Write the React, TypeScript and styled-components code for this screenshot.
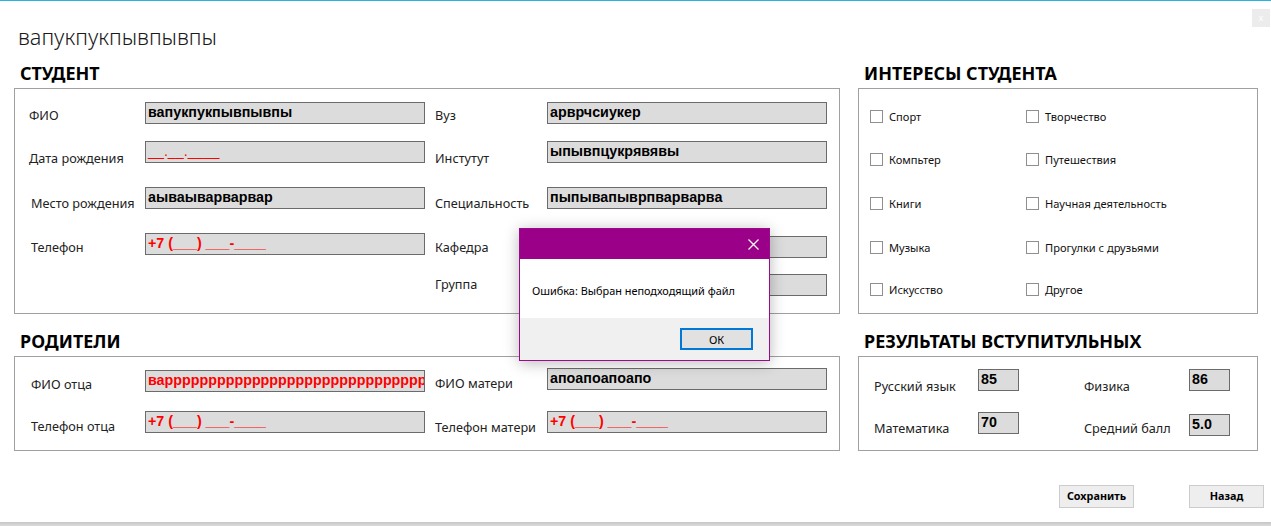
import React from "react";
import styled, { createGlobalStyle } from "styled-components";

const UI = `"Noto Sans", "Open Sans", sans-serif`;
const MS = `"Liberation Sans", Arial, sans-serif`;
const LABEL_SIZE = 12.7;

const Global = createGlobalStyle`
  html, body { margin: 0; padding: 0; background: #fff; }
  body { font-family: ${UI}; }
`;

const Window = styled.div`
  position: relative;
  width: 1271px;
  height: 526px;
  box-sizing: border-box;
  border-top: 1px solid #27b4de;
  background: #fff;
  overflow: hidden;
  display: flex;
  flex-direction: column;
`;

const CloseChrome = styled.div`
  position: absolute;
  left: 1252px;
  top: 8px;
  width: 18px;
  height: 18px;
  background: #ececec;
  color: #fff;
  font: 9px/18px ${MS};
  text-align: center;
`;

const Title = styled.h1`
  margin: 0;
  height: 56px;
  box-sizing: border-box;
  padding: 22px 0 0 18px;
  font: 300 21.7px/28px ${UI};
  color: #1a1a1a;
`;

const Grid = styled.div`
  display: grid;
  grid-template-columns: 826px 400px;
  column-gap: 18px;
  row-gap: 11px;
  padding-left: 14px;
`;

const Section = styled.section`
  display: flex;
  flex-direction: column;
`;

const Header = styled.h2`
  margin: 0;
  height: 31px;
  box-sizing: border-box;
  padding: 6px 0 0 6px;
  font: 700 17.9px/20px ${UI};
  color: #000;
`;

const Frame = styled.div<{ $h: number; $pl: number }>`
  height: ${(p) => p.$h}px;
  box-sizing: border-box;
  border: 1px solid #a0a0a0;
  padding-left: ${(p) => p.$pl}px;
  display: flex;
`;

const FieldColumn = styled.div<{ $gap?: number }>`
  display: flex;
  flex-direction: column;
  margin-left: ${(p) => p.$gap ?? 0}px;
`;

const FieldRow = styled.div<{ $mt: number }>`
  display: flex;
  height: 22px;
  margin-top: ${(p) => p.$mt}px;
`;

const FieldLabel = styled.div<{ $w: number; $dy: number; $dx?: number }>`
  width: ${(p) => p.$w}px;
  box-sizing: border-box;
  padding-top: ${(p) => p.$dy - (8 - 0.326 * LABEL_SIZE)}px;
  padding-left: ${(p) => p.$dx ?? 0}px;
  font: 400 ${LABEL_SIZE}px/16px ${UI};
  color: #222;
  white-space: nowrap;
`;

const InputBox = styled.div<{ $w?: number; $red?: boolean; $thin?: boolean }>`
  width: ${(p) => p.$w ?? 280}px;
  height: 22px;
  box-sizing: border-box;
  border: 1px solid #6b6b6b;
  background: #dcdcdc;
  padding: 1px 2px 0;
  font: ${(p) => (p.$thin ? 400 : 700)} 14.3px/16px ${MS};
  color: ${(p) => (p.$red ? "#ff0000" : "#000")};
  white-space: nowrap;
  overflow: hidden;
  text-overflow: clip;
`;

const CheckGrid = styled.div`
  display: grid;
  grid-auto-flow: column;
  grid-template-columns: 156px auto;
  grid-template-rows: 43px 44px 44px 42px 13px;
  padding-top: 21px;
  padding-left: 11px;
`;

const CheckItem = styled.label`
  display: flex;
  align-items: center;
  gap: 6px;
  height: 13px;
  font: 400 11.1px/13px ${UI};
  color: #111;
  white-space: nowrap;
`;

const CheckBox = styled.span`
  width: 13px;
  height: 13px;
  box-sizing: border-box;
  border: 1px solid #8f8f8f;
  background: #fff;
  flex: none;
`;

const Footer = styled.div`
  display: flex;
  justify-content: flex-end;
  gap: 55px;
  padding-right: 7px;
  margin-top: 34px;
`;

const Button = styled.button`
  width: 75px;
  height: 23px;
  box-sizing: border-box;
  border: 1px solid #cccccc;
  background: #eeeeee;
  font: 700 10.8px/1 ${UI};
  color: #000;
  padding: 0;
`;

const BottomBar = styled.div`
  margin-top: 14px;
  height: 4px;
  background: linear-gradient(#c6c6c6, #dcdcdc);
`;

const Dialog = styled.div`
  position: absolute;
  left: 519px;
  top: 227px;
  width: 251px;
  height: 133px;
  box-sizing: border-box;
  border: 1px solid #9b0a8a;
  box-shadow: 0 2px 14px rgba(0, 0, 0, 0.28);
  display: flex;
  flex-direction: column;
`;

const DialogTitle = styled.div`
  height: 30px;
  background: #9b0088;
  display: flex;
  justify-content: flex-end;
  align-items: center;
  padding-right: 10px;
`;

const DialogBody = styled.div`
  height: 59px;
  background: #fff;
  box-sizing: border-box;
  padding: 4px 0 0 12px;
  display: flex;
  align-items: center;
  font: 400 10.9px/16px ${UI};
  color: #000;
`;

const DialogFooter = styled.div`
  flex: 1;
  background: #f0f0f0;
  display: flex;
  justify-content: flex-end;
  align-items: flex-start;
  padding: 10px 16px 0 0;
`;

const OkButton = styled.button`
  width: 73px;
  height: 22px;
  box-sizing: border-box;
  border: 2px solid #0078d7;
  background: #e1e1e1;
  font: 400 11px/1 ${UI};
  color: #000;
  padding: 0;
`;

type Field = { label: string; value: string; mt: number; dy: number; dx?: number; red?: boolean; thin?: boolean };

const studentLeft: Field[] = [
  { label: "ФИО", value: "вапукпукпывпывпы", mt: 13, dy: 9, dx: 0 },
  { label: "Дата рождения", value: "__.__.____", mt: 17, dy: 13, dx: 0, red: true, thin: true },
  { label: "Место рождения", value: "аываыварварвар", mt: 24, dy: 11.7, dx: 2 },
  { label: "Телефон", value: "+7 (___) ___-____", mt: 24, dy: 9.7, dx: 2, red: true },
];

const studentRight: Field[] = [
  { label: "Вуз", value: "арврчсиукер", mt: 13, dy: 8.7 },
  { label: "Инстутут", value: "ыпывпцукрявявы", mt: 17, dy: 13 },
  { label: "Специальность", value: "пыпывапыврпварварва", mt: 24, dy: 12 },
  { label: "Кафедра", value: "", mt: 27, dy: 6.7 },
  { label: "Группа", value: "", mt: 16, dy: 6.3 },
];

const parentsLeft: Field[] = [
  { label: "ФИО отца", value: "вар" + "р".repeat(30), mt: 13, dy: 10, dx: 2, red: true },
  { label: "Телефон отца", value: "+7 (___) ___-____", mt: 19, dy: 10.7, dx: 2, red: true },
];

const parentsRight: Field[] = [
  { label: "ФИО матери", value: "апоапоапоапо", mt: 11, dy: 11.3 },
  { label: "Телефон матери", value: "+7 (___) ___-____", mt: 21, dy: 11.5, red: true },
];

const resultsLeft: Field[] = [
  { label: "Русский язык", value: "85", mt: 12, dy: 12.7 },
  { label: "Математика", value: "70", mt: 21, dy: 11.5 },
];

const resultsRight: Field[] = [
  { label: "Физика", value: "86", mt: 12, dy: 12.7 },
  { label: "Средний балл", value: "5.0", mt: 23, dy: 9.5 },
];

const interests = [
  "Спорт",
  "Компьтер",
  "Книги",
  "Музыка",
  "Искусство",
  "Творчество",
  "Путешествия",
  "Научная деятельность",
  "Прогулки с друзьями",
  "Другое",
];

function Fields({ items, labelW, inputW, gap }: { items: Field[]; labelW: number; inputW: number; gap?: number }) {
  return (
    <FieldColumn $gap={gap}>
      {items.map((f) => (
        <FieldRow key={f.label} $mt={f.mt}>
          <FieldLabel $w={labelW} $dy={f.dy} $dx={f.dx}>
            {f.label}
          </FieldLabel>
          <InputBox $w={inputW} $red={f.red} $thin={f.thin}>
            {f.value}
          </InputBox>
        </FieldRow>
      ))}
    </FieldColumn>
  );
}

export default function App() {
  return (
    <>
      <Global />
      <Window>
        <CloseChrome>x</CloseChrome>
        <Title>вапукпукпывпывпы</Title>
        <Grid>
          <Section>
            <Header>СТУДЕНТ</Header>
            <Frame $h={226} $pl={14}>
              <Fields items={studentLeft} labelW={116} inputW={280} />
              <Fields items={studentRight} labelW={112} inputW={280} gap={10} />
            </Frame>
          </Section>
          <Section>
            <Header>ИНТЕРЕСЫ СТУДЕНТА</Header>
            <Frame $h={226} $pl={0}>
              <CheckGrid>
                {interests.map((t) => (
                  <CheckItem key={t}>
                    <CheckBox />
                    {t}
                  </CheckItem>
                ))}
              </CheckGrid>
            </Frame>
          </Section>
          <Section>
            <Header>РОДИТЕЛИ</Header>
            <Frame $h={95} $pl={14}>
              <Fields items={parentsLeft} labelW={116} inputW={280} />
              <Fields items={parentsRight} labelW={112} inputW={280} gap={10} />
            </Frame>
          </Section>
          <Section>
            <Header>РЕЗУЛЬТАТЫ ВСТУПИТУЛЬНЫХ</Header>
            <Frame $h={95} $pl={15}>
              <Fields items={resultsLeft} labelW={104} inputW={41} />
              <Fields items={resultsRight} labelW={105} inputW={41} gap={65} />
            </Frame>
          </Section>
        </Grid>
        <Footer>
          <Button>Сохранить</Button>
          <Button>Назад</Button>
        </Footer>
        <BottomBar />
        <Dialog>
          <DialogTitle>
            <svg width="11" height="11" viewBox="0 0 11 11">
              <path d="M0.5 0.5 L10.5 10.5 M10.5 0.5 L0.5 10.5" stroke="#fff" strokeWidth="1.2" />
            </svg>
          </DialogTitle>
          <DialogBody>Ошибка: Выбран неподходящий файл</DialogBody>
          <DialogFooter>
            <OkButton>ОК</OkButton>
          </DialogFooter>
        </Dialog>
      </Window>
    </>
  );
}
